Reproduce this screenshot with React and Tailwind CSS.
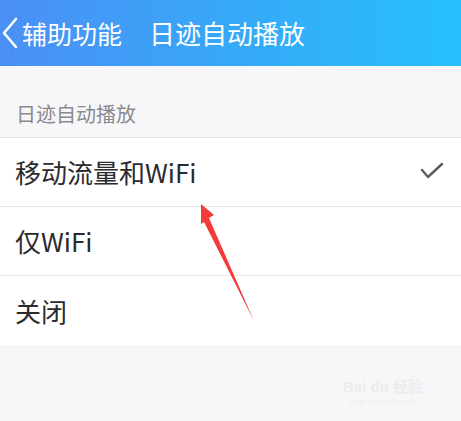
export default function App() {
  const font = { fontFamily: '"Noto Sans CJK SC", "Noto Sans", sans-serif' };
  return (
    <div className="relative w-[461px] h-[421px] overflow-hidden bg-[#f7f7f9]" style={font}>
      <div className="h-[66px] flex items-center bg-gradient-to-r from-[#4a8ff5] via-[#36a8f8] to-[#25c0fb] text-white">
        <svg width="20" height="34" viewBox="0 0 20 34" className="ml-[1px]">
          <path d="M15 3 L3 17 L15 31" fill="none" stroke="white" strokeWidth="2.6" strokeLinecap="round" strokeLinejoin="round" />
        </svg>
        <span className="text-[25px] leading-none ml-[1px]">辅助功能</span>
        <span className="text-[26px] leading-none ml-[27px]">日迹自动播放</span>
      </div>
      <div className="h-[71px] flex items-end pb-[13px] pl-[16px]">
        <span className="text-[20px] leading-none text-[#8a8a8e]">日迹自动播放</span>
      </div>
      <div className="bg-white border-t border-[#e6e6e8]">
        <div className="h-[69px] flex items-center justify-between pl-[15px] pr-[17px] border-b border-[#e6e6e8]">
          <span className="text-[26px] leading-none text-[#2b2b2f]">移动流量和WiFi</span>
          <svg width="24" height="20" viewBox="0 0 24 20">
            <path d="M2 8 L8 15 L22 2" fill="none" stroke="#5b5b66" strokeWidth="2.4" strokeLinecap="round" strokeLinejoin="round" />
          </svg>
        </div>
        <div className="h-[69px] flex items-center pl-[15px] border-b border-[#e6e6e8]">
          <span className="text-[26px] leading-none text-[#2b2b2f]">仅WiFi</span>
        </div>
        <div className="h-[69px] flex items-center pl-[15px]">
          <span className="text-[26px] leading-none text-[#2b2b2f]">关闭</span>
        </div>
      </div>
      <svg className="absolute left-0 top-0" width="461" height="421" viewBox="0 0 461 421">
        <polygon points="201,204 214,215 209,218 254,321 204,222 201,224" fill="#f43a3a" />
      </svg>
      <div className="absolute left-[343px] top-[379px] flex flex-col items-center text-[#ececef] leading-none">
        <span className="text-[15px] font-bold" style={{ fontFamily: '"Liberation Sans", "Noto Sans CJK SC", sans-serif' }}>Bai du 经验</span>
        <span className="text-[9px] mt-[3px]" style={{ fontFamily: '"Liberation Serif", serif' }}>jingyan.baidu.com</span>
      </div>
    </div>
  );
}
